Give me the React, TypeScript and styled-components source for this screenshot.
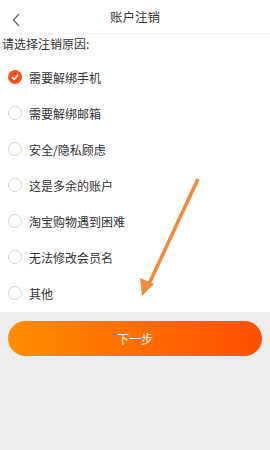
import React, { useState } from 'react';
import styled, { createGlobalStyle } from 'styled-components';

const GlobalStyle = createGlobalStyle`
    html, body {
        margin: 0;
        padding: 0;
        background: #ededed;
        font-family: "Noto Sans CJK SC", "Noto Sans", sans-serif;
    }
`;

const reasons = [
    '需要解绑手机',
    '需要解绑邮箱',
    '安全/隐私顾虑',
    '这是多余的账户',
    '淘宝购物遇到困难',
    '无法修改会员名',
    '其他',
];

const Page = styled.div`
    position: relative;
    width: 270px;
    height: 450px;
    background: #ededed;
    overflow: hidden;
`;

const Header = styled.div`
    height: 33px;
    display: flex;
    align-items: center;
    justify-content: center;
    position: relative;
    background: #fff;
    border-bottom: 1px solid #f2f2f2;
`;

const BackButton = styled.div`
    position: absolute;
    left: 11px;
    top: 9px;
    width: 12px;
    height: 16px;
`;

const Title = styled.div`
    font-size: 12.5px;
    color: #333;
`;

const Body = styled.div`
    background: #fff;
    padding-bottom: 1px;
`;

const Heading = styled.div`
    font-size: 12px;
    color: #333;
    height: 20px;
    line-height: 20px;
    padding-left: 2px;
`;

const List = styled.div`
    display: flex;
    flex-direction: column;
    padding-top: 5px;
`;

const Row = styled.div`
    height: 36px;
    display: flex;
    align-items: center;
    padding-left: 8px;
    gap: 7px;
    cursor: pointer;
`;

const Radio = styled.div<{ checked: boolean }>`
    width: 14px;
    height: 14px;
    border-radius: 50%;
    box-sizing: border-box;
    display: flex;
    align-items: center;
    justify-content: center;
    background: ${({ checked }) => (checked ? '#f4511e' : '#fff')};
    border: ${({ checked }) => (checked ? 'none' : '1px solid #d6d6d6')};
`;

const Label = styled.span`
    font-size: 12px;
    color: #333;
`;

const Footer = styled.div`
    padding: 9px 8px 0;
`;

const NextButton = styled.button`
    width: 100%;
    height: 35px;
    border: none;
    border-radius: 18px;
    background: linear-gradient(90deg, #ff8e00 0%, #ff6a00 55%, #ff5000 100%);
    color: #fff;
    font-size: 12px;
    font-family: inherit;
`;

const Arrow = styled.svg`
    position: absolute;
    left: 136px;
    top: 174px;
    pointer-events: none;
`;

export default function App() {
    const [selected, setSelected] = useState(0);
    return (
        <Page>
            <GlobalStyle />
            <Header>
                <BackButton>
                    <svg width="12" height="16" viewBox="0 0 12 16">
                        <path d="M8 2 L2.5 8 L8 14" fill="none" stroke="#666" strokeWidth="1.3" />
                    </svg>
                </BackButton>
                <Title>账户注销</Title>
            </Header>
            <Body>
                <Heading>请选择注销原因:</Heading>
                <List>
                    {reasons.map((r, i) => (
                        <Row key={r} onClick={() => setSelected(i)}>
                            <Radio checked={selected === i}>
                                {selected === i && (
                                    <svg width="10" height="10" viewBox="0 0 10 10">
                                        <path
                                            d="M2 5.2 L4.2 7.3 L8.2 2.8"
                                            fill="none"
                                            stroke="#fff"
                                            strokeWidth="1.6"
                                        />
                                    </svg>
                                )}
                            </Radio>
                            <Label>{r}</Label>
                        </Row>
                    ))}
                </List>
            </Body>
            <Footer>
                <NextButton>下一步</NextButton>
            </Footer>
            <Arrow width="70" height="130" viewBox="0 0 70 130">
                <line x1="62" y1="5" x2="12" y2="112" stroke="#f08a3c" strokeWidth="3.5" />
                <polygon points="6,122 4,104 18,110" fill="#f08a3c" />
            </Arrow>
        </Page>
    );
}
